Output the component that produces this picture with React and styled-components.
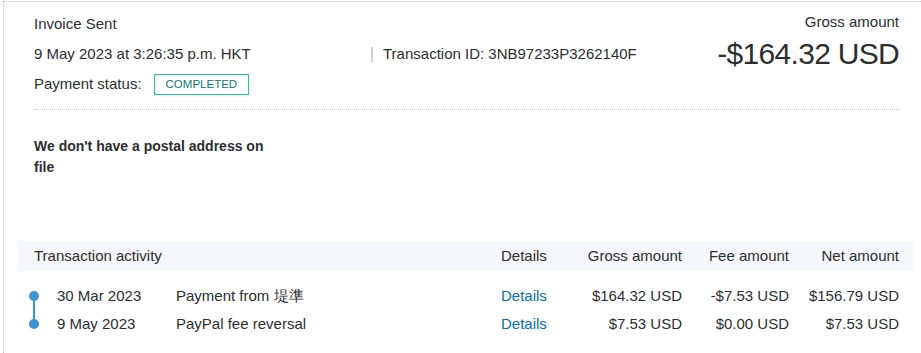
import React from 'react';
import styled, { createGlobalStyle } from 'styled-components';

const GlobalStyle = createGlobalStyle`
  html, body {
    margin: 0;
    padding: 0;
    background: #ffffff;
  }
  body {
    font-family: 'Liberation Sans', Arial, sans-serif;
    font-size: 15px;
    color: #2c2e2f;
  }
  * {
    box-sizing: border-box;
  }
`;

const Page = styled('div')({
  marginTop: 1,
  marginLeft: 3,
  borderTop: '1px dotted #c4c4c4',
  borderLeft: '1px dotted #c4c4c4',
  padding: '7px 22px 20px 30px',
  minHeight: 360,
});

const Summary = styled('section')({
  display: 'grid',
  gridTemplateColumns: '337px 1fr auto',
  gridTemplateRows: '30px 30px 30px',
  alignItems: 'center',
  paddingBottom: 10,
  borderBottom: '1px dotted #c4c4c4',
});

const Line = styled('div')({
  fontSize: 15,
  lineHeight: '20px',
  display: 'flex',
  alignItems: 'center',
  gridColumn: ({ $span }) => ($span ? '1 / 3' : 'auto'),
});

const IdCell = styled('div')({
  display: 'flex',
  alignItems: 'center',
  fontSize: 15,
  lineHeight: '20px',
  '&::before': {
    content: '""',
    display: 'block',
    width: 2,
    height: 15,
    background: '#cbd2d6',
    marginRight: 10,
  },
});

const AmountBlock = styled('div')({
  gridColumn: 3,
  gridRow: '1 / 3',
  alignSelf: 'start',
  textAlign: 'right',
  paddingTop: 3,
});

const AmountLabel = styled('div')({
  fontSize: 15,
  lineHeight: '20px',
});

const BigAmount = styled('div')({
  fontSize: 30,
  lineHeight: '36px',
  marginTop: 4,
  letterSpacing: '-0.7px',
});

const Badge = styled('span')({
  display: 'inline-flex',
  alignItems: 'center',
  height: 21,
  marginLeft: 12,
  padding: '0 11px',
  border: '1px solid #1ec98d',
  color: '#0b7a6f',
  fontSize: 11.5,
  textTransform: 'uppercase',
});

const Address = styled('p')({
  margin: '26px 0 0',
  maxWidth: 245,
  fontWeight: 'bold',
  fontSize: 14,
  lineHeight: '21px',
});

const Table = styled('div')({
  margin: '63px -15px 0',
});

const HeadRow = styled('div')({
  display: 'grid',
  gridTemplateColumns: '467px 70px 111px 107px 110px',
  alignItems: 'center',
  height: 30,
  padding: '0 15px',
  background: '#f5f7fa',
});

const BodyRow = styled(HeadRow)({
  height: 28,
  background: 'transparent',
  '&:first-of-type': {
    marginTop: 11,
  },
});

const Cell = styled('div')({
  fontSize: 15,
  lineHeight: '20px',
  whiteSpace: 'nowrap',
  textAlign: ({ $right }) => ($right ? 'right' : 'left'),
});

const Activity = styled('div')({
  display: 'flex',
  alignItems: 'center',
  fontSize: 15,
  lineHeight: '20px',
});

const Marker = styled('span')({
  position: 'relative',
  flex: '0 0 10px',
  width: 10,
  height: 10,
  marginLeft: -5,
  marginRight: 18,
  borderRadius: '50%',
  background: '#3d93cf',
  '&::after': {
    content: '""',
    display: ({ $last }) => ($last ? 'none' : 'block'),
    position: 'absolute',
    left: 4,
    top: 8,
    width: 2,
    height: 24,
    background: '#3d93cf',
  },
});

const DateText = styled('span')({
  width: 119,
  flexShrink: 0,
});

const Link = styled('a')({
  color: '#0070ba',
  textDecoration: 'none',
});

const rows = [
  {
    date: '30 Mar 2023',
    text: 'Payment from 堤準',
    gross: '$164.32 USD',
    fee: '-$7.53 USD',
    net: '$156.79 USD',
  },
  {
    date: '9 May 2023',
    text: 'PayPal fee reversal',
    gross: '$7.53 USD',
    fee: '$0.00 USD',
    net: '$7.53 USD',
  },
];

const App = () => (
  <>
    <GlobalStyle />
    <Page>
      <Summary>
        <Line $span>Invoice Sent</Line>
        <AmountBlock>
          <AmountLabel>Gross amount</AmountLabel>
          <BigAmount>-$164.32 USD</BigAmount>
        </AmountBlock>
        <Line>9 May 2023 at 3:26:35 p.m. HKT</Line>
        <IdCell>Transaction ID: 3NB97233P3262140F</IdCell>
        <Line $span>
          Payment status:
          <Badge>Completed</Badge>
        </Line>
      </Summary>

      <Address>We don't have a postal address on file</Address>

      <Table>
        <HeadRow>
          <Cell>Transaction activity</Cell>
          <Cell>Details</Cell>
          <Cell $right>Gross amount</Cell>
          <Cell $right>Fee amount</Cell>
          <Cell $right>Net amount</Cell>
        </HeadRow>
        <div>
          {rows.map((row, i) => (
            <BodyRow key={row.date}>
              <Activity>
                <Marker $last={i === rows.length - 1} />
                <DateText>{row.date}</DateText>
                <span>{row.text}</span>
              </Activity>
              <Cell>
                <Link href="#">Details</Link>
              </Cell>
              <Cell $right>{row.gross}</Cell>
              <Cell $right>{row.fee}</Cell>
              <Cell $right>{row.net}</Cell>
            </BodyRow>
          ))}
        </div>
      </Table>
    </Page>
  </>
);

export default App;
